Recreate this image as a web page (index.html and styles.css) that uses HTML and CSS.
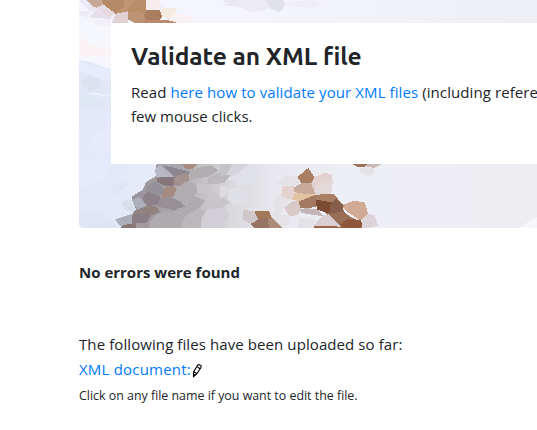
FILE: index.html
```
<!DOCTYPE html>
<html lang="en">
<head>
<meta charset="utf-8">
<title>Validate an XML file</title>
<link rel="stylesheet" href="styles.css">
</head>
<body>
<main class="page">
  <section class="hero">
    <svg class="mosaic" viewBox="79 0 458 228" shape-rendering="crispEdges" aria-hidden="true">
      <defs>
        <linearGradient id="sky" x1="0" x2="1" y1="0" y2="0"><stop offset="0" stop-color="#e2e8fa"/><stop offset=".25" stop-color="#e8ebf7"/><stop offset=".5" stop-color="#eeeff6"/><stop offset="1" stop-color="#ededf2"/></linearGradient>
        <linearGradient id="top" x1="0" x2="1" y1="0" y2="0"><stop offset="0" stop-color="#f4f5fe"/><stop offset=".35" stop-color="#f4f5fd"/><stop offset=".7" stop-color="#f1f2f7"/><stop offset="1" stop-color="#eeeff4"/></linearGradient>
        <linearGradient id="left" x1="0" x2="0" y1="0" y2="1"><stop offset="0" stop-color="#e6ebfd"/><stop offset=".3" stop-color="#e1e7f7"/><stop offset="1" stop-color="#e4e9fb"/></linearGradient>
        <linearGradient id="rock" x1="0" x2="1" y1="0" y2="0"><stop offset="0" stop-color="#918b93"/><stop offset=".2" stop-color="#a7a2a6"/><stop offset=".35" stop-color="#bfbcc0"/><stop offset=".5" stop-color="#d9d8dd"/><stop offset=".7" stop-color="#e8e8ee"/><stop offset="1" stop-color="#edeef4"/></linearGradient>
      </defs>
      <path fill="url(#sky)" d="M79 0h458v228H79z"/>
      <path fill="url(#top)" d="M79 0h458v23H79z"/>
      <path fill="url(#left)" d="M79 23h32v141H79z"/>
      <g transform="translate(70 20) scale(.33333)">
        <path fill="#f6f6fd" d="M27 0h96v148l-20-6-35-14-41-8z"/>
        <path fill="#f3f0f7" d="M67 0h56v20l-50-7z"/>
        <path fill="#fbf2f6" d="M27 48l32 28 28 4 36 8v24l-48-4-48-2z"/>
        <path fill="#e7ecfc" d="M27 120l41 16 35 8 20 4v35l-30-4-25-12-41-17z"/>
        <path fill="#dce2f0" d="M33 178l28-12 28 16 8 18-33 15-26-16z"/>
        <path fill="#eff0fb" d="M49 222l10-4 64 5v7z"/>
        <path fill="#dee5f3" d="M30 225l16-2 60 28-12 8-56 1z"/>
        <path fill="#e6eafc" d="M108 270l15 10v110l-40 14-28-24 20-45 28-5z"/>
      </g>
      <g transform="translate(70 0) scale(.33333)">
        <path fill="#b98e6e" d="M50 0h178v30l42 2 6 20-10 10 20 7h-80l-35-12-37-25-10-2z"/>
        <path fill="#ede9f4" d="M27 0h23l48 22 34 18-4 17-40-6-34-22z"/>
        <path fill="#c7a897" d="M50 0h46l8 8-23 15-13-3z"/>
        <path fill="#e7dbe1" d="M81 23l19-11 37 29-22 15-25-20z"/>
        <path fill="#b68a69" d="M96 0h62l6 17-27 24-39-29z"/>
        <path fill="#c09573" d="M158 0h53l-9 34-38 6-27 1 27-24z"/>
        <path fill="#b98c6a" d="M196 0h32v29l-8 10-18-5-38 6z"/>
        <path fill="#e1d1d2" d="M125 68l12-27 38-7v34z"/>
        <path fill="#bd9375" d="M175 36l27-2 27 8-8 27h-28l-19-12z"/>
        <path fill="#ab7d60" d="M229 30h39l10 14-10 16h-40l-7-14z"/>
        <path fill="#b88b70" d="M221 69l12-9h56l42 9z"/>
        <path fill="#f7edef" d="M228 0h42l3 20-14 10h-31z"/>
        <path fill="#f5ebe3" d="M273 22l48 3-9 26-16 9-23-15z"/>
        <path fill="#fbf1f3" d="M312 40l59 12-13 17h-35l-27-9z"/>
        <path fill="#edecf3" d="M27 35l35-2-8 19-27-6z"/>
        <path fill="#e6e0ea" d="M55 52l32-27 34 36-25-6z"/>
        <path fill="#e8e9ef" d="M461 0h59l-20 12-36-2z"/>
      </g>
      <g transform="translate(220 0) scale(.33333)">
        <path fill="#ebebf1" d="M10 12l50-3 10-9h65l18 20-30 13-28 4-34-16-54-5z"/>
        <path fill="#e1e2e8" d="M135 0h57l3 17-17 20-28-13z"/>
        <path fill="#eeeef4" d="M195 8l65-8 60 8-42 15-73-3z"/>
      </g>
      <g transform="translate(70 155) scale(.33333)">
        <path fill="#dfe5f4" d="M27 180l57-9 47 25 6 23H35l-8-8zM123 90l39-14 11 13-40 32z"/>
        <path fill="#e5eafc" d="M27 27h96l-22 42-48 27-26-3z"/>
        <path fill="#d9deeb" d="M154 138l31-4 15 28-12 10-24-8z"/>
        <path fill="url(#rock)" d="M276 27h534l-15 25 4 25-20 40 16 34-25 68H152l46-56-13-38 33-20 10-24 34-20-5-32z"/>
        <path fill="#b6b7c3" d="M271 29l38 36-50 2-5-24z"/>
        <path fill="#8f8790" d="M279 31l89 20-21 15-34-1-17-17z"/>
        <path fill="#aaa6ad" d="M279 27h60l28 22-81-17z"/>
        <path fill="#a98b80" d="M336 27h46l-14 16-23-3z"/>
        <path fill="#85777c" d="M263 68l51-3-4 30-25-2-25-13z"/>
        <path fill="#a39190" d="M314 66l36-14 10 22-23 17-26 3z"/>
        <path fill="#949097" d="M230 94l26-15 24 16 4 20-22 9-33-12z"/>
        <path fill="#a58a82" d="M286 97l24-4 13 12-10 20-40 5z"/>
        <path fill="#8c8188" d="M216 126l18-15 35 12-1 27-40 3z"/>
        <path fill="#979097" d="M270 129l43-3 34 28-34 13-50-13z"/>
        <path fill="#acaeba" d="M185 134l23-8 23 26-28 11zM135 193l52-17-3 36-32 3z"/>
        <path fill="#92827f" d="M203 164l30-13 24 1 12 18-23 11-56-6z"/>
        <path fill="#8a7e85" d="M188 176l58 3-20 27-40 3z"/>
        <path fill="#897675" d="M152 219l8-8 34-7 8 15z"/>
        <path fill="#a19a9f" d="M197 204h31l8 15h-38z"/>
        <path fill="#b1adb0" d="M356 46l66-16 23 16-27 18-56 10zM320 105l24-25 34 4 3 30-34 34-40-20z"/>
        <path fill="#aeaaae" d="M347 154l20-31 38 13-15 21-45 27-29-21zM236 206l18-24 30-13 64 15-18 35h-94z"/>
        <path fill="#bbb7ba" d="M415 67l40-21 25 16-18 23-50 2zM345 185l45-26 21 17-15 43h-62z"/>
        <path fill="#c7c5c9" d="M380 87l35 3 22 26-56-1zM411 126l35-7 34 23-29 20-39-9z"/>
        <path fill="#d1cfd5" d="M396 184l18-20 46-5 20 22-28 38h-60z"/>
      </g>
      <g transform="translate(220 155) scale(.33333)">
        <path fill="#c3c3c8" d="M0 27h40L16 60 0 64z"/>
        <path fill="#d4d5da" d="M40 27h45L52 57 16 61z"/>
        <path fill="#dfe1e7" d="M85 35l39 5-19 46-45 8-38-24 30-13z"/>
        <path fill="#dfe0e6" d="M25 100l28-3 33 25-10 19-28 9-24-13z"/>
        <path fill="#dfdadf" d="M0 92l20 3v22L0 132z"/>
        <path fill="#e0d1cd" d="M223 97l22-13 40 2 50-2-2 32-46 3-41 37-17-2z"/>
        <path fill="#a67d67" d="M286 119l56-2 28 35 1 23 50 25 7 19h-60l-40-35-41-37z"/>
        <path fill="#e5e2e7" d="M170 85l28-24 37 2 2 24-39 5z"/>
        <path fill="#aa7e62" d="M265 39l19 29-10 16-27 4-15-22z"/>
        <path fill="#e3d2cf" d="M284 65l30-11 20 3 4 25-27 2-26 12-10-12z"/>
        <path fill="#e2d9da" d="M285 96l26-13 27-4-2 29-3 9-46 3z"/>
        <path fill="#c8aa9b" d="M223 97l22-13 29 1 12 33-36-2-29-5z"/>
        <path fill="#e2c3a0" d="M222 113l65 6-42 20-29-4z"/>
        <path fill="#e3d2cf" d="M188 94l34-3-1 30-8 14-30-12z"/>
        <path fill="#a17a61" d="M233 141l54-22v36l-28 7-20-4z"/>
        <path fill="#ab7f64" d="M286 119l56-2 6 15-16 13-44-12z"/>
        <path fill="#7b4a33" d="M287 134l54 9-13 33-37-13z"/>
        <path fill="#865e49" d="M332 144l16-12 24 20-4 18-41 8z"/>
        <path fill="#d9c9c8" d="M192 158l26-20 17 2 8 24-10 17-25 2z"/>
        <path fill="#c2b5b5" d="M239 163l21-4 35 5 15 20-65-10z"/>
        <path fill="#d0aa94" d="M371 149l32-12 31 6 10 31-22 24-38-26-14-12z"/>
        <path fill="#986f56" d="M327 178l42-10 21 17-2 24-24 5z"/>
        <path fill="#8e573b" d="M364 206l20-15 37 4 7 13-7 11h-70z"/>
        <path fill="#e4e2e7" d="M161 130l18-8 34 13-23 20-8 27-29 3 11-20zM239 187l45 7 1 25h-53zM156 184l39-6 14 8-6 23-20 7z"/>
        <path fill="#d9ced1" d="M283 210l24-28 18-4 39 36-7 5h-74z"/>
        <path fill="#9f6544" d="M283 214l60-1 26 6h-87z"/>
        <path fill="#d0c7c9" d="M68 165l34 3 13 25-25 13-20-11z"/>
        <path fill="#a17858" d="M103 168l44-1 7 22-38 8z"/>
        <path fill="#957464" d="M91 207l24-14 29-4 5 30h-44z"/>
        <path fill="#ad8b79" d="M144 192l11-6 32 33h-40z"/>
        <path fill="#dcd4d9" d="M427 197l15-20 22 3 10 32-26 7h-22z"/>
        <path fill="#9d7059" d="M394 27h48l-6 8-20 1z"/>
        <path fill="#c9b8b2" d="M442 27h44l-23 12-25-5z"/>
        <path fill="#e6e3e8" d="M421 40l16-4 26 5-3 19-22 4-18-14z"/>
      </g>
      <path fill="#f7f6fb" d="M518 228l19-11v11z"/>
    </svg>
    <div class="card">
      <h1>Validate an XML file</h1>
      <p>Read <a href="#">here how to validate your XML files</a> (including refere<br><span class="t-few">few mouse clicks.</span></p>
    </div>
  </section>
  <p class="result">No errors were found</p>
  <section class="uploads">
    <p>The following files have been uploaded so far:</p>
    <p class="file"><a class="t-doc" href="#">XML document:</a><svg class="pencil" viewBox="0 0 10 14" aria-hidden="true"><path d="M1.5 12.5V8l4-6.5 1.5-1 2 1v2L5 9.5zM1.5 8L5 9.5M5.5 3l2.5 1.7" fill="#fff" stroke="#000" stroke-width="1.1"/><path d="M1 9.5v4l3-2.5z"/></svg></p>
    <p class="hint">Click on any file name if you want to edit the file.</p>
  </section>
</main>
</body>
</html>
```
FILE: styles.css
```
* { box-sizing: border-box; }
body {
  margin: 0;
  overflow: hidden;
  background: #fff;
  color: #212529;
  font: 15px/24px "Open Sans", "Noto Sans", sans-serif;
  letter-spacing: 0.09px;
}
h1, p { margin: 0; }
a { color: #007bff; text-decoration: none; }
.page { margin-left: 79px; }
.hero {
  display: grid;
  grid-template-columns: 100%;
  height: 228px;
  overflow: hidden;
  border-radius: 0 0 0 5px;
  background: #ededf2;
}
.mosaic { grid-area: 1 / 1; width: 458px; height: 228px; }
.card {
  grid-area: 1 / 1;
  z-index: 1;
  margin: 23px 0 0 32px;
  padding: 18px 0 0 20px;
  height: 141px;
  overflow: hidden;
  background: #fff;
  white-space: nowrap;
}
h1 { font: 700 24.5px/31px Ubuntu, "Noto Sans", sans-serif; letter-spacing: -0.04px; margin-bottom: 8px; }
.t-few { letter-spacing: 0; }
.t-doc { letter-spacing: 0.2px; }
.result { margin-top: 32px; font-weight: 700; letter-spacing: 0; }
.uploads { margin-top: 48px; }
.file { display: flex; align-items: center; margin-top: 1px; }
.pencil { width: 10px; height: 14px; margin: 3px 0 0 1px; }
.hint { margin-top: 3px; font-size: 12.4px; letter-spacing: 0; }
```
